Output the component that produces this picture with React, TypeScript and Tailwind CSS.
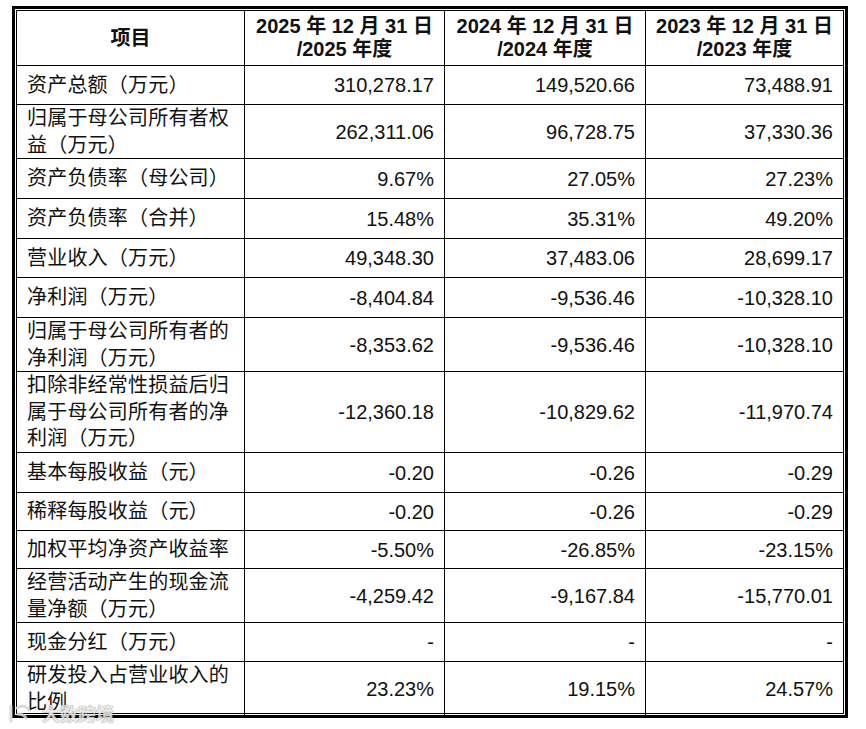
import React from 'react';

type Row = { label: string; values: [string, string, string]; h: string };

const rows: Row[] = [
  { label: '资产总额（万元）', values: ['310,278.17', '149,520.66', '73,488.91'], h: 'h-[39px]' },
  { label: '归属于母公司所有者权益（万元）', values: ['262,311.06', '96,728.75', '37,330.36'], h: 'h-[54px]' },
  { label: '资产负债率（母公司）', values: ['9.67%', '27.05%', '27.23%'], h: 'h-[40px]' },
  { label: '资产负债率（合并）', values: ['15.48%', '35.31%', '49.20%'], h: 'h-[40px]' },
  { label: '营业收入（万元）', values: ['49,348.30', '37,483.06', '28,699.17'], h: 'h-[39px]' },
  { label: '净利润（万元）', values: ['-8,404.84', '-9,536.46', '-10,328.10'], h: 'h-[40px]' },
  { label: '归属于母公司所有者的净利润（万元）', values: ['-8,353.62', '-9,536.46', '-10,328.10'], h: 'h-[54px]' },
  { label: '扣除非经常性损益后归属于母公司所有者的净利润（万元）', values: ['-12,360.18', '-10,829.62', '-11,970.74'], h: 'h-[81px]' },
  { label: '基本每股收益（元）', values: ['-0.20', '-0.26', '-0.29'], h: 'h-[40px]' },
  { label: '稀释每股收益（元）', values: ['-0.20', '-0.26', '-0.29'], h: 'h-[38px]' },
  { label: '加权平均净资产收益率', values: ['-5.50%', '-26.85%', '-23.15%'], h: 'h-[38px]' },
  { label: '经营活动产生的现金流量净额（万元）', values: ['-4,259.42', '-9,167.84', '-15,770.01'], h: 'h-[54px]' },
  { label: '现金分红（万元）', values: ['-', '-', '-'], h: 'h-[39px]' },
  { label: '研发投入占营业收入的比例', values: ['23.23%', '19.15%', '24.57%'], h: 'h-[51px]' },
];

const years = ['2025', '2024', '2023'];

const cols = 'grid grid-cols-[228px_200px_201px_197px]';

export default function App() {
  return (
    <div className="relative w-[866px] h-[729px] bg-white overflow-hidden text-[#111] font-['Liberation_Sans','Noto_Sans_CJK_SC',sans-serif]">
      <div className="ml-[12px] mt-[6px] w-[836px] border-[3px] border-black p-px">
        <div className="border border-black">
          {/* header */}
          <div className={`${cols} h-[55px] border-b border-black font-bold text-[20px] leading-[23px]`}>
            <div className="border-r border-black flex items-center justify-center">项目</div>
            {years.map((y, i) => (
              <div
                key={y}
                className={`flex flex-col items-center justify-center ${i < 2 ? 'border-r border-black' : ''}`}
              >
                <span>{y} 年 12 月 31 日</span>
                <span>/{y} 年度</span>
              </div>
            ))}
          </div>

          {rows.map((r, ri) => (
            <div
              key={r.label}
              className={`${cols} ${r.h} ${ri < rows.length - 1 ? 'border-b border-black' : ''} text-[20px]`}
            >
              <div className="border-r border-black flex items-center pl-[10px] pr-[6px] leading-[26.5px] tracking-[0.2px]">
                <span>{r.label}</span>
              </div>
              {r.values.map((v, i) => (
                <div
                  key={i}
                  className={`flex items-center justify-end pr-[10px] ${i < 2 ? 'border-r border-black' : ''}`}
                >
                  {v}
                </div>
              ))}
            </div>
          ))}
        </div>
      </div>

      {/* watermark */}
      <div className="absolute left-[8px] top-[700px] flex items-center gap-[10px] opacity-85">
        <svg width="24" height="22" viewBox="0 0 24 22" fill="none">
          <path d="M3 3v15" stroke="#d4d4d4" strokeWidth="3" strokeLinecap="round" />
          <path d="M9 5c4-3 10-2 12 2M10 11c3 0 6 1 8 4" stroke="#d4d4d4" strokeWidth="3" strokeLinecap="round" />
        </svg>
        <span className="text-[18px] font-bold text-[#e8e8e8] [text-shadow:0_0_1px_#888,0_0_1px_#888] font-['Noto_Sans_CJK_SC',sans-serif] tracking-[0px]">
          大数跨境
        </span>
      </div>
    </div>
  );
}
